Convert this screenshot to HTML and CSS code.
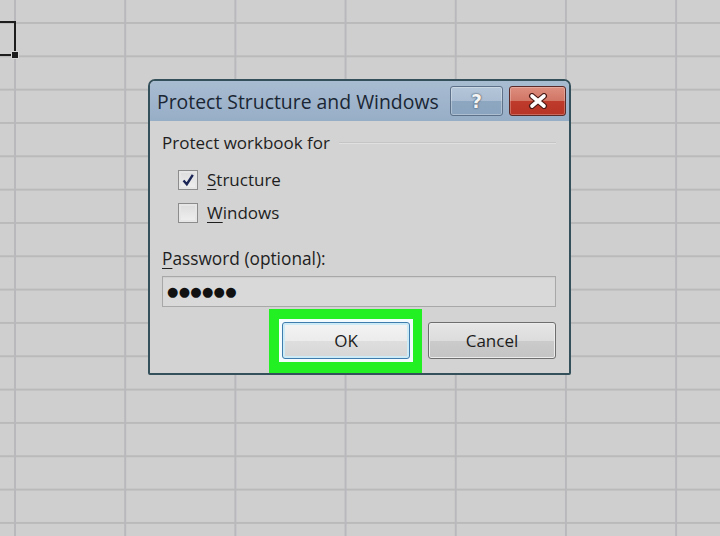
FILE: index.html
```html
<!DOCTYPE html>
<html lang="en">
<head>
  <meta charset="UTF-8" />
  <meta name="viewport" content="width=device-width, initial-scale=1.0"/>
  <title>Protect Structure and Windows</title>
  <link rel="stylesheet" href="styles.css">
</head>
<body>
  <!-- active cell with its fill handle -->
  <div class="active-cell"><span class="fill-handle"></span></div>

  <div class="dialog">
    <div class="titlebar">
      <span class="title">Protect Structure and Windows</span>
      <button class="caption-btn help">?</button>
      <button class="caption-btn close">
        <svg width="22" height="16" viewBox="0 0 22 16">
          <path d="M5 3 L17 13 M17 3 L5 13" stroke="#4a1a16" stroke-width="6" stroke-linecap="round"/>
          <path d="M5 3 L17 13 M17 3 L5 13" stroke="#fff" stroke-width="3.6" stroke-linecap="round"/>
        </svg>
      </button>
    </div>

    <div class="content">
      <div class="group-head">
        <span>Protect workbook for</span>
        <span class="group-line"></span>
      </div>

      <label class="check-row">
        <span class="checkbox">
          <svg width="14" height="14" viewBox="0 0 14 14">
            <path d="M2.5 7.5 L5.8 11.2 L11.8 1.8" fill="none" stroke="#1b2656" stroke-width="2.4"/>
          </svg>
        </span>
        <span><u>S</u>tructure</span>
      </label>
      <label class="check-row">
        <span class="checkbox"></span>
        <span><u>W</u>indows</span>
      </label>

      <div class="field-label"><u>P</u>assword (optional):</div>
      <div class="password">●●●●●●</div>

      <div class="actions">
        <span class="highlight">
          <button class="btn default">OK</button>
        </span>
        <button class="btn cancel">Cancel</button>
      </div>
    </div>
  </div>
</body>
</html>
```

FILE: styles.css
```css
html, body {
  height: 100%;
}
body {
  margin: 0;
  position: relative;
  overflow: hidden;
  font-family: "Open Sans", "Noto Sans", sans-serif;
  color: #1e1e1e;
  background-color: #cfcfcf;
  background-image:
    linear-gradient(to right, #b9b9bd 2px, transparent 2px),
    linear-gradient(to bottom, #bababa 2px, transparent 2px);
  background-size: 110.2px 33.33px;
  background-position: 14px 22px;
}

.active-cell {
  position: absolute;
  left: -4px;
  top: 21px;
  width: 16px;
  height: 31px;
  border: 2px solid #1d1d1d;
}
.fill-handle {
  position: absolute;
  right: -5px;
  bottom: -5px;
  width: 6px;
  height: 6px;
  background: #1d1d1d;
  border: 1px solid #d8d8d8;
}

.dialog {
  position: absolute;
  left: 148px;
  top: 79px;
  width: 423px;
  box-sizing: border-box;
  border: 2px solid #34505a;
  border-radius: 7px 7px 2px 2px;
  background: #d3d3d3;
  overflow: hidden;
}

.titlebar {
  height: 40px;
  display: flex;
  align-items: center;
  padding: 0 3px 0 7px;
  background: linear-gradient(#a8bcd1, #97aec7);
}
.title {
  font-size: 19.4px;
  color: #1a2634;
}
.caption-btn {
  height: 30px;
  padding: 0;
  border-radius: 3px;
  display: flex;
  align-items: center;
  justify-content: center;
  font-family: "DejaVu Sans", sans-serif;
}
.help {
  width: 53px;
  margin-left: auto;
  border: 1px solid #5d7189;
  background: linear-gradient(#b4c6d9 0, #a9bcd1 50%, #8ea7c1 50%, #8aa3be 100%);
  box-shadow: inset 0 0 0 1px rgba(255, 255, 255, 0.3);
  color: #f4f4f4;
  font-size: 19px;
  font-weight: bold;
  text-shadow: 0 0 2px #3b4b5e, 0 0 1px #3b4b5e;
}
.close {
  width: 57px;
  margin-left: 6px;
  border: 1px solid #5b2a27;
  background: linear-gradient(#dd8e7f 0, #d17565 50%, #bf3b2c 50%, #b73526 100%);
  box-shadow: inset 0 0 0 1px rgba(255, 255, 255, 0.25);
}

.content {
  padding: 11px 13px 0 12px;
  font-size: 17px;
  line-height: 22px;
}

.group-head {
  display: flex;
  align-items: center;
}
.group-line {
  flex: 1;
  margin-left: 9px;
  border-top: 1px solid #c5c5c5;
  border-bottom: 1px solid #e0e0e0;
}

.check-row {
  display: flex;
  align-items: center;
  gap: 9px;
  height: 33px;
  padding-left: 16px;
}
.group-head + .check-row {
  margin-top: 9px;
}
.checkbox {
  width: 20px;
  height: 20px;
  box-sizing: border-box;
  border: 1px solid #8c8c8c;
  background: linear-gradient(#dcdcdc, #f0f0f0);
  box-shadow: inset 0 0 0 2px #e6e6e6;
  display: flex;
  align-items: center;
  justify-content: center;
}
u {
  text-decoration-thickness: 1px;
  text-underline-offset: 3px;
}

.field-label {
  margin-top: 19px;
  font-size: 17.3px;
}
.password {
  margin-top: 6px;
  height: 31px;
  box-sizing: border-box;
  border: 1px solid #a8a8a8;
  background: #d9d9d9;
  box-shadow: inset 0 1px 1px rgba(0, 0, 0, 0.05);
  padding-left: 4px;
  display: flex;
  align-items: center;
  font-family: "DejaVu Sans", sans-serif;
  font-size: 13px;
  letter-spacing: 0.3px;
  color: #111;
}

.actions {
  margin-top: 2px;
  display: flex;
  justify-content: flex-end;
  align-items: flex-start;
}
.highlight {
  display: block;
  border-style: solid;
  border-color: #22f022;
  border-width: 10px 9px 11px 10px;
  padding: 3px;
  background: #f4fbff;
}
.btn {
  display: block;
  width: 128px;
  height: 37px;
  border-radius: 3px;
  font-family: "Open Sans", "Noto Sans", sans-serif;
  font-size: 17px;
  color: #1c1c1c;
  padding: 0;
}
.default {
  border: 1px solid #3d7cad;
  background: linear-gradient(#f4f4f4 0, #ececec 50%, #dedede 50%, #d6d6d6 100%);
  box-shadow: inset 0 0 0 2px #cdeaf7;
}
.cancel {
  margin-left: 6px;
  margin-top: 13px;
  border: 1px solid #6e6e6e;
  background: linear-gradient(#e6e6e6 0, #dcdcdc 50%, #cbcbcb 50%, #c4c4c4 100%);
  box-shadow: inset 0 0 0 1px #ececec;
}
```
